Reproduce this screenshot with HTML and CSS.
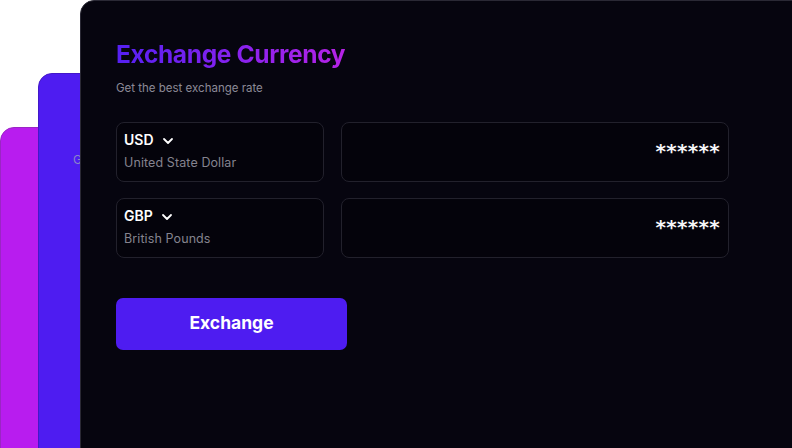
FILE: index.html
```html
<!DOCTYPE html>
<html>
<head>
<meta charset="utf-8">
<link rel="stylesheet" href="styles.css">
</head>
<body>
<div class="stage">
  <div class="card card-magenta"></div>
  <div class="card card-purple"><span class="ghost">G</span></div>
  <div class="card card-dark">
    <h1 class="title">Exchange Currency</h1>
    <p class="subtitle">Get the best exchange rate</p>
    <div class="rows">
      <div class="row">
        <div class="select">
          <div class="code">USD
            <svg class="chev" width="12" height="8" viewBox="0 0 12 8"><path d="M2 2l4 4 4-4" fill="none" stroke="#fff" stroke-width="1.8" stroke-linecap="round" stroke-linejoin="round"/></svg>
          </div>
          <div class="name">United State Dollar</div>
        </div>
        <div class="amount">******</div>
      </div>
      <div class="row">
        <div class="select">
          <div class="code">GBP
            <svg class="chev" width="12" height="8" viewBox="0 0 12 8"><path d="M2 2l4 4 4-4" fill="none" stroke="#fff" stroke-width="1.8" stroke-linecap="round" stroke-linejoin="round"/></svg>
          </div>
          <div class="name">British Pounds</div>
        </div>
        <div class="amount">******</div>
      </div>
    </div>
    <button class="btn">Exchange</button>
  </div>
</div>
</body>
</html>
```
FILE: styles.css
```css
* { box-sizing: border-box; }
html, body { margin: 0; padding: 0; background: #fff; overflow: hidden; }
body { width: 792px; height: 448px; font-family: "Inter", "Lato", sans-serif; }
.stage { position: relative; width: 792px; height: 448px; overflow: hidden; }
.card { position: absolute; border-radius: 14px; }
.card-magenta { left: 0; top: 127px; width: 200px; height: 400px; background: #b81cef; border: 1px solid #9a26c4; }
.card-purple { left: 38px; top: 73px; width: 200px; height: 420px; background: #4e1cf1; border: 1px solid #4318c8; }
.ghost { position: absolute; left: 34px; top: 78px; font-size: 12px; color: #8a84c8; }
.card-dark {
  left: 80px; top: 0; width: 760px; height: 500px;
  background: #06050f; border: 1px solid #2a2935;
  padding: 38px 0 0 35px;
  display: flex; flex-direction: column; align-items: flex-start;
}
.title {
  margin: 0; font-size: 24.5px; font-weight: 700; letter-spacing: -0.35px; line-height: 30px;
  background: linear-gradient(90deg, #5520f2 0%, #8a22ee 55%, #b623e6 100%);
  -webkit-background-clip: text; background-clip: text; color: transparent;
}
.subtitle { margin: 12px 0 0; font-size: 11.5px; color: #8c8a97; line-height: 14px; }
.rows { margin-top: 27px; display: flex; flex-direction: column; gap: 16px; }
.row { display: flex; gap: 17px; }
.select, .amount {
  height: 60px; border: 1px solid #22212c; border-radius: 8px; background: #04030b;
}
.select { width: 208px; padding: 8px 0 0 7px; }
.code { display: flex; align-items: center; gap: 8px; color: #fff; font-size: 14px; font-weight: 600; line-height: 18px; }
.chev { margin-top: 1px; }
.name { margin-top: 6px; font-size: 12.5px; color: #85838f; line-height: 15px; letter-spacing: 0.1px; }
.amount { width: 388px; display: flex; justify-content: flex-end; padding: 17px 8px 0 0; color: #f6f6f8; font-size: 20px; letter-spacing: 0.3px; line-height: 22px; font-family: "DejaVu Sans", sans-serif; font-weight: 700; }
.btn {
  margin-top: 40px; width: 231px; height: 52px; border: 0; border-radius: 7px; padding: 0 0 3px;
  background: #4e1cf1; color: #fff; font-family: inherit; font-size: 17.5px; font-weight: 700;
}
```
